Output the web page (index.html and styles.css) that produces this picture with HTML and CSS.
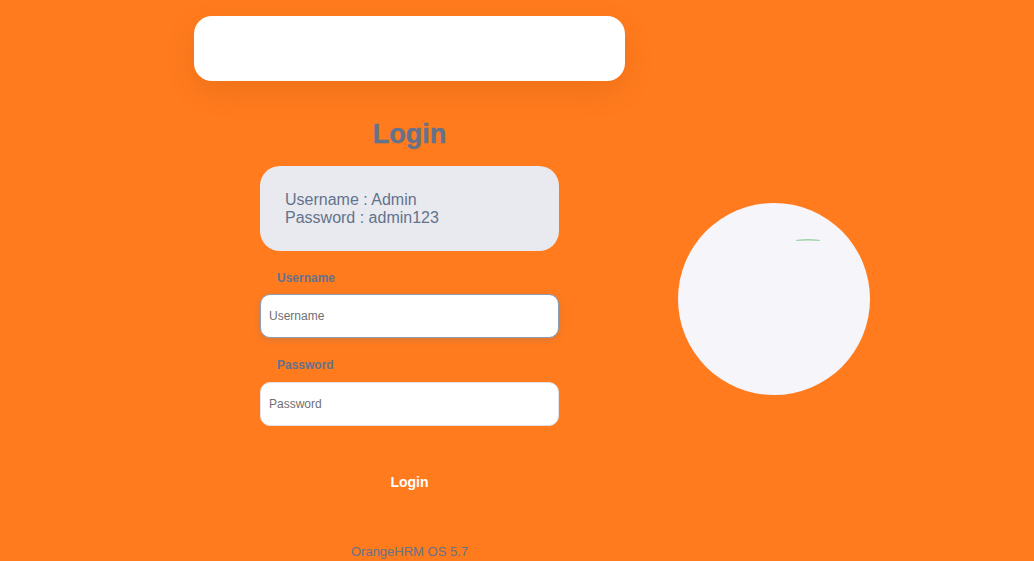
FILE: index.html
```html
<!DOCTYPE html>
<html lang="en">
<head>
<meta charset="utf-8">
<title>OrangeHRM Login</title>
<link rel="stylesheet" href="styles.css">
</head>
<body>
<div class="page">
  <div class="left">
    <div class="brand-card"></div>
    <h1 class="title">Login</h1>
    <div class="form">
      <div class="creds">
        <p>Username : Admin</p>
        <p>Password : admin123</p>
      </div>
      <label class="label" for="u">Username</label>
      <input class="input focused" id="u" type="text" placeholder="Username">
      <label class="label label-pw" for="p">Password</label>
      <input class="input" id="p" type="password" placeholder="Password">
      <button class="btn" type="button">Login</button>
    </div>
    <div class="footer">OrangeHRM OS 5.7</div>
  </div>
  <div class="right">
    <div class="circle">
      <svg class="mark" width="26" height="6" viewBox="0 0 26 6">
        <path d="M2 3.4 Q13 2.2 24 3.4" fill="none" stroke="#9fd3a8" stroke-width="1.4" stroke-linecap="round"/>
      </svg>
    </div>
  </div>
</div>
</body>
</html>
```
FILE: styles.css
```css
html {
  background: #ff7b1d;
}
body {
  margin: 0;
  font-family: "Liberation Sans", Arial, sans-serif;
  color: #64728c;
  background: #ff7b1d;
}
.page {
  display: flex;
  min-height: 650px;
}
.left {
  width: 431px;
  margin-left: 194px;
  display: flex;
  flex-direction: column;
  align-items: center;
}
.brand-card {
  width: 100%;
  height: 65px;
  margin-top: 16px;
  background: #fff;
  border-radius: 18px;
  box-shadow: 0 10px 30px rgba(120, 50, 0, 0.12);
}
.title {
  margin: 38px 0 0;
  font-size: 27px;
  line-height: 30px;
  font-weight: 700;
  -webkit-text-stroke: 0.4px #64728c;
  color: #64728c;
}
.form {
  width: 299px;
  margin-top: 17px;
  display: flex;
  flex-direction: column;
}
.creds {
  background: #e8eaef;
  border-radius: 20px;
  padding: 25px 25px 24px;
}
.creds p {
  margin: 0;
  font-size: 16px;
  line-height: 18px;
}
.label {
  margin: 19px 0 8px 17px;
  font-size: 12px;
  line-height: 16px;
  font-weight: 700;
}
.label-pw {
  margin-bottom: 9px;
}
.input {
  box-sizing: border-box;
  height: 44px;
  padding: 0 8px;
  border: 1px solid #dfe2e8;
  border-radius: 10px;
  background: #fff;
  font-family: "Liberation Sans", Arial, sans-serif;
  font-size: 12px;
  color: #333;
  outline: none;
}
.input::placeholder {
  color: #6f6f74;
}
.input.focused {
  border-color: #8c9cb4;
  box-shadow: 0 2px 6px rgba(100, 114, 140, 0.25);
}
.btn {
  margin-top: 36px;
  height: 40px;
  background: transparent;
  border: 0;
  color: #fff;
  font-family: "Liberation Sans", Arial, sans-serif;
  font-weight: 700;
  font-size: 14px;
  cursor: pointer;
}
.footer {
  margin-top: 42px;
  font-size: 13px;
  line-height: 16px;
}
.right {
  margin-left: 53px;
  padding-top: 203px;
}
.circle {
  width: 192px;
  height: 192px;
  border-radius: 50%;
  background: #f5f5fa;
  display: flex;
  justify-content: flex-end;
  align-items: flex-start;
}
.mark {
  margin: 34px 49px 0 0;
}
```
